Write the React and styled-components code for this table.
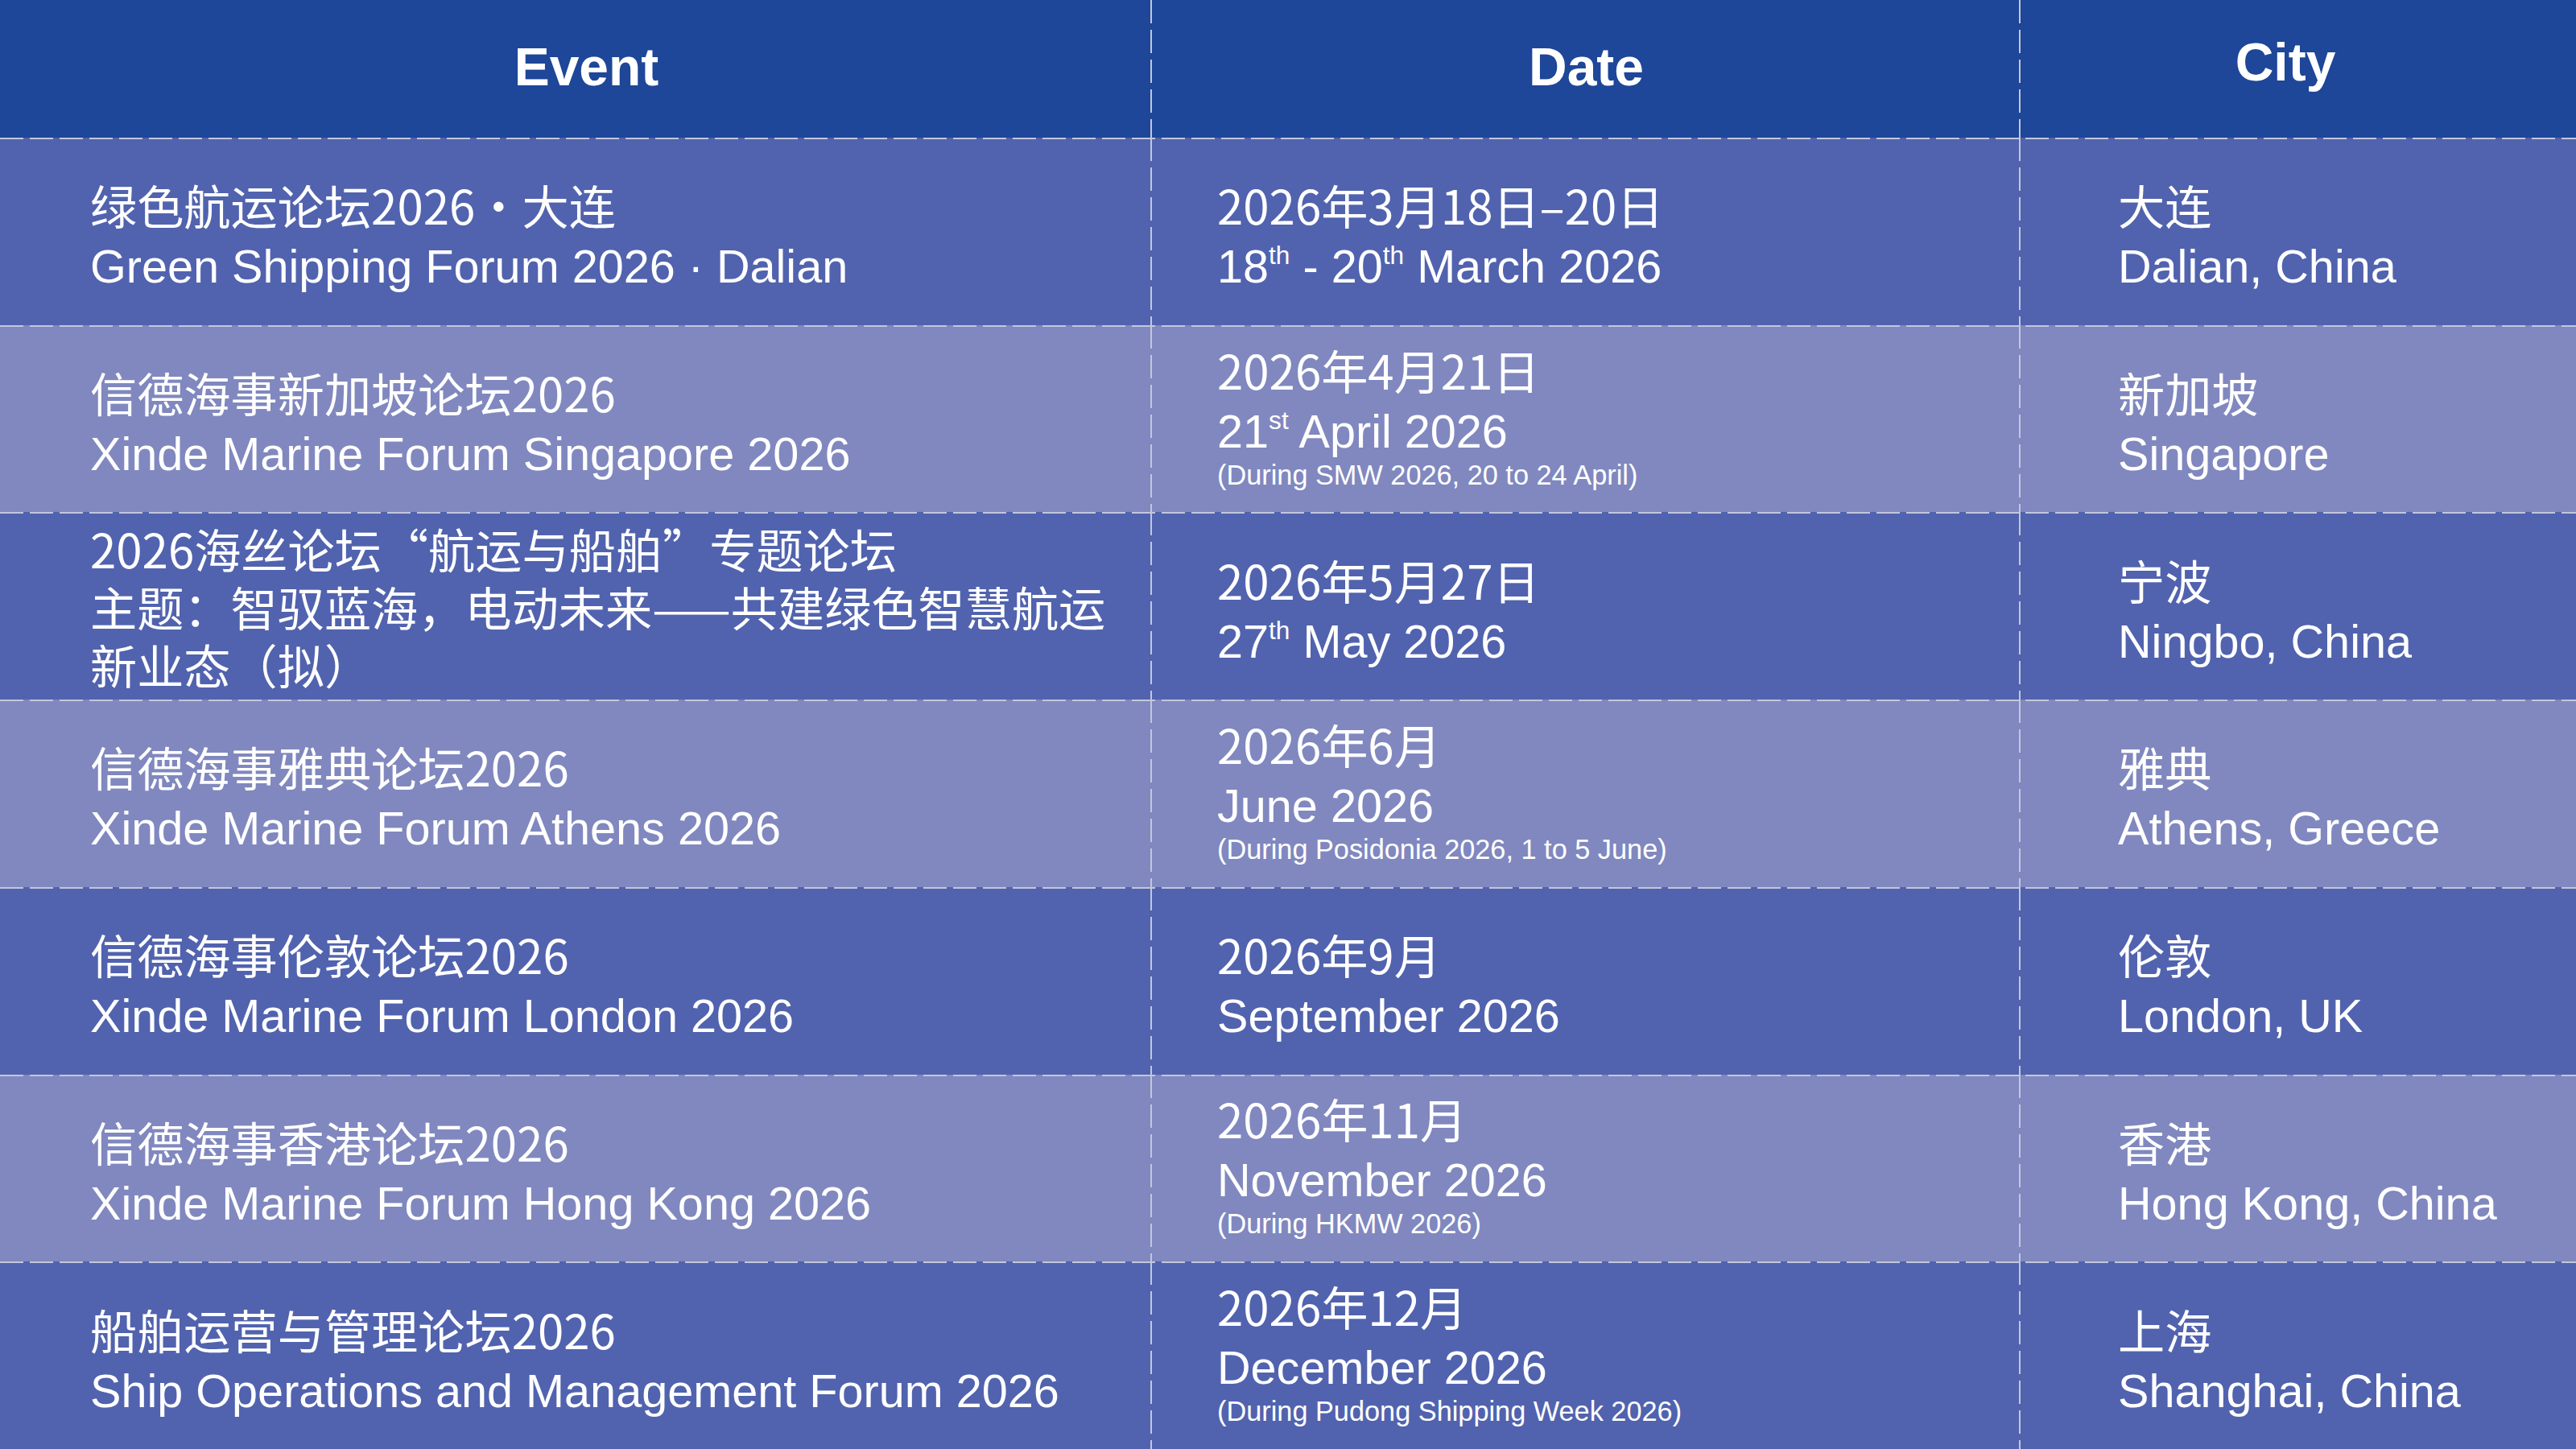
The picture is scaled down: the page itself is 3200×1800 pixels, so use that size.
import React from "react";
import styled, { createGlobalStyle } from "styled-components";

const DASH = "#c3c7dc";
const HEADER = "#1e4699";
const DARK = "#5163ae";
const LIGHT = "#8088bf";

const hLine = `repeating-linear-gradient(90deg, ${DASH} 0 29px, transparent 29px 37px)`;
const vLine = `repeating-linear-gradient(180deg, ${DASH} 0 29px, transparent 29px 37px)`;

const GlobalStyle = createGlobalStyle`
  html, body {
    margin: 0;
    padding: 0;
    background: ${DARK};
  }
  body {
    width: 3200px;
    height: 1800px;
    overflow: hidden;
  }
`;

const S = {
  Table: styled.div`
    width: 3200px;
    height: 1800px;
    display: grid;
    grid-template-rows: 171px repeat(7, 1fr);
    color: #ffffff;
  `,
  Row: styled.div`
    display: grid;
    grid-template-columns: 1431px 1079px 1fr;
    background-color: ${(p) => p.$tone};
    background-image: ${(p) => (p.$ruled ? hLine : "none")};
    background-size: 100% 2px;
    background-repeat: no-repeat;
    background-position: left top;
  `,
  HeadCell: styled.div`
    display: flex;
    align-items: center;
    justify-content: center;
    padding-left: ${(p) => Math.max(p.$shift || 0, 0) * 2}px;
    padding-right: ${(p) => Math.max(-(p.$shift || 0), 0) * 2}px;
    padding-bottom: ${(p) => 6 + (p.$lift || 0)}px;
    font-family: "Liberation Sans", Arial, sans-serif;
    font-weight: 700;
    font-size: 66px;
    background-image: ${(p) => (p.$divider ? vLine : "none")};
    background-size: 2px 100%;
    background-repeat: no-repeat;
    background-position: right top;
  `,
  Cell: styled.div`
    display: flex;
    flex-direction: column;
    justify-content: center;
    min-width: 0;
    padding: ${(p) => p.$top ?? 11}px ${(p) => p.$right || 0}px 0
      ${(p) => p.$left}px;
    background-image: ${(p) => (p.$divider ? vLine : "none")};
    background-size: 2px 100%;
    background-repeat: no-repeat;
    background-position: right top;
  `,
  Zh: styled.div`
    font-family: "Noto Sans CJK SC", "Liberation Sans", sans-serif;
    font-size: 58.2px;
    line-height: 72px;
  `,
  En: styled.div`
    font-family: "Liberation Sans", Arial, sans-serif;
    font-size: 57.6px;
    line-height: 72px;
    padding-top: 5px;
    white-space: nowrap;
  `,
  Note: styled.div`
    font-family: "Liberation Sans", Arial, sans-serif;
    font-size: 34.3px;
    line-height: 36px;
    margin-bottom: 21px;
    white-space: nowrap;
  `,
  Sup: styled.sup`
    font-size: 0.55em;
    line-height: 0;
    vertical-align: 0.72em;
  `,
};

const events = [
  {
    zh: ["绿色航运论坛2026·大连"],
    en: "Green Shipping Forum 2026 · Dalian",
    dateZh: "2026年3月18日–20日",
    dateEn: (
      <>
        18<S.Sup>th</S.Sup> - 20<S.Sup>th</S.Sup> March 2026
      </>
    ),
    cityZh: "大连",
    cityEn: "Dalian, China",
  },
  {
    zh: ["信德海事新加坡论坛2026"],
    en: "Xinde Marine Forum Singapore 2026",
    dateZh: "2026年4月21日",
    dateEn: (
      <>
        21<S.Sup>st</S.Sup> April 2026
      </>
    ),
    note: "(During SMW 2026, 20 to 24 April)",
    cityZh: "新加坡",
    cityEn: "Singapore",
  },
  {
    zh: [
      "2026海丝论坛“航运与船舶”专题论坛",
      "主题：智驭蓝海，电动未来——共建绿色智慧航运新业态（拟）",
    ],
    dateZh: "2026年5月27日",
    dateEn: (
      <>
        27<S.Sup>th</S.Sup> May 2026
      </>
    ),
    cityZh: "宁波",
    cityEn: "Ningbo, China",
  },
  {
    zh: ["信德海事雅典论坛2026"],
    en: "Xinde Marine Forum Athens 2026",
    dateZh: "2026年6月",
    dateEn: "June 2026",
    note: "(During Posidonia 2026, 1 to 5 June)",
    cityZh: "雅典",
    cityEn: "Athens, Greece",
  },
  {
    zh: ["信德海事伦敦论坛2026"],
    en: "Xinde Marine Forum London 2026",
    dateZh: "2026年9月",
    dateEn: "September 2026",
    cityZh: "伦敦",
    cityEn: "London, UK",
  },
  {
    zh: ["信德海事香港论坛2026"],
    en: "Xinde Marine Forum Hong Kong 2026",
    dateZh: "2026年11月",
    dateEn: "November 2026",
    note: "(During HKMW 2026)",
    cityZh: "香港",
    cityEn: "Hong Kong, China",
  },
  {
    zh: ["船舶运营与管理论坛2026"],
    en: "Ship Operations and Management Forum 2026",
    dateZh: "2026年12月",
    dateEn: "December 2026",
    note: "(During Pudong Shipping Week 2026)",
    cityZh: "上海",
    cityEn: "Shanghai, China",
  },
];

export default function App() {
  return (
    <>
      <GlobalStyle />
      <S.Table>
        <S.Row $tone={HEADER}>
          <S.HeadCell $divider $shift={13}>
            Event
          </S.HeadCell>
          <S.HeadCell $divider>Date</S.HeadCell>
          <S.HeadCell $shift={-16} $lift={12}>
            City
          </S.HeadCell>
        </S.Row>

        {events.map((ev, i) => (
          <S.Row key={i} $tone={i % 2 ? LIGHT : DARK} $ruled>
            <S.Cell $divider $left={112} $right={18} $top={ev.en ? 11 : 0}>
              {ev.zh.map((line, j) => (
                <S.Zh key={j}>{line}</S.Zh>
              ))}
              {ev.en && <S.En>{ev.en}</S.En>}
            </S.Cell>
            <S.Cell $divider $left={81}>
              <S.Zh>{ev.dateZh}</S.Zh>
              <S.En>{ev.dateEn}</S.En>
              {ev.note && <S.Note>{ev.note}</S.Note>}
            </S.Cell>
            <S.Cell $left={121}>
              <S.Zh>{ev.cityZh}</S.Zh>
              <S.En>{ev.cityEn}</S.En>
            </S.Cell>
          </S.Row>
        ))}
      </S.Table>
    </>
  );
}
